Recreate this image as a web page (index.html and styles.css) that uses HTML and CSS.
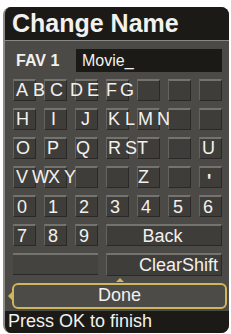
FILE: index.html
```html
<!DOCTYPE html>
<html>
<head>
    <link rel="stylesheet" href="styles.css">
</head>
<body>
    <div class="panel">
        <div class="title">Change Name</div>

        <div class="fav-row">
            <div class="fav-label">FAV 1</div>
            <div class="fav-input">Movie_</div>
        </div>

        <div class="keys">
            <div class="key-row">
                <div class="key"></div><div class="key"></div><div class="key"></div><div class="key"></div>
                <div class="key"></div><div class="key"></div><div class="key"></div>
                <div class="chars r1"><span>A</span><span>B</span><span>C</span><span>D</span><span>E</span><span>F</span><span>G</span></div>
            </div>
            <div class="key-row">
                <div class="key"></div><div class="key"></div><div class="key"></div><div class="key"></div>
                <div class="key"></div><div class="key"></div><div class="key"></div>
                <div class="chars r2"><span>H</span><span>I</span><span>J</span><span>K</span><span>L</span><span>M</span><span>N</span></div>
            </div>
            <div class="key-row">
                <div class="key"></div><div class="key"></div><div class="key"></div><div class="key"></div>
                <div class="key"></div><div class="key"></div><div class="key"></div>
                <div class="chars r3"><span>O</span><span>P</span><span>Q</span><span>R</span><span>S</span><span>T</span><span>U</span></div>
            </div>
            <div class="key-row">
                <div class="key"></div><div class="key"></div><div class="key"></div><div class="key"></div>
                <div class="key"></div><div class="key"></div><div class="key"></div>
                <div class="chars r4"><span>V</span><span>W</span><span>X</span><span>Y</span><span>Z</span><span class="tick">'</span></div>
            </div>
            <div class="key-row">
                <div class="key">0</div><div class="key">1</div><div class="key">2</div><div class="key">3</div>
                <div class="key">4</div><div class="key five">5</div><div class="key">6</div>
            </div>
            <div class="key-row">
                <div class="key">7</div><div class="key">8</div><div class="key">9</div>
                <div class="key wide back">Back</div>
            </div>
            <div class="key-row">
                <div class="key blank"></div>
                <div class="key wide clear">ClearShift</div>
            </div>
        </div>

        <div class="done-area">
            <div class="done">Done</div>
        </div>

        <div class="footer">Press OK to finish</div>
    </div>
</body>
</html>
```

FILE: styles.css
```css
:root {
    --bar: #1c1a17;
    --body: #4c4a47;
    --key: #3f3d3a;
    --key-light: #75736e;
    --key-dark: #2b2927;
    --text: #f2f1ee;
    --gold: #cdb65c;
}

body {
    margin: 0;
    background: #fff;
    font-family: 'Liberation Sans', Arial, sans-serif;
    color: var(--text);
}

.panel {
    margin: 7px 2px 2px 3px;
    background: var(--body);
    border-radius: 8px;
    overflow: hidden;
    border-left: 2px solid #8d8b87;
}

.title {
    background: var(--bar);
    height: 33px;
    line-height: 33px;
    font-size: 25px;
    font-weight: bold;
    padding-left: 7px;
    border-bottom: 1px solid #8a8884;
}

.fav-row {
    display: flex;
    padding: 8px 0 0 11px;
}

.fav-label {
    width: 60px;
    font-size: 16px;
    font-weight: bold;
    line-height: 23px;
}

.fav-input {
    width: 140px;
    height: 23px;
    line-height: 23px;
    background: var(--bar);
    font-size: 16px;
    padding-left: 6px;
}

.keys {
    display: flex;
    flex-direction: column;
    gap: 7px;
    margin: 7px 0 0 8px;
}

.key-row {
    position: relative;
    display: grid;
    grid-template-columns: repeat(7, 23px);
    column-gap: 8px;
}

.key {
    height: 22px;
    box-sizing: border-box;
    background: var(--key);
    border-top: 2px solid var(--key-light);
    border-left: 1px solid #65635f;
    border-right: 1px solid var(--key-dark);
    border-bottom: 1px solid var(--key-dark);
    font-size: 18px;
    line-height: 20px;
    padding-left: 3px;
}

.key.five { padding-left: 4px; }

.key.wide {
    grid-column: span 4;
}

.key.blank {
    grid-column: span 3;
    border-left: none;
    border-right: none;
    background: #454340;
}

.back {
    text-align: center;
    padding-right: 6px;
}

.clear {
    text-align: right;
    padding-right: 3px;
    height: 23px;
}

.chars {
    position: absolute;
    top: 0;
    left: 0;
    display: grid;
    padding-left: 3px;
    font-size: 18px;
    line-height: 22px;
}

.r1 { grid-template-columns: 17px 17px 20px 17px 19px 14px auto; }
.r2 { grid-template-columns: 35px 30px 27px 17px 13px 19px auto; }
.r3 { grid-template-columns: 31px 29px 32px 17px 12px 65px auto; }
.r4 { grid-template-columns: 16px 16px 16px 74px 69px auto; }

.tick {
    font-weight: bold;
    position: relative;
    top: 4px;
}

.done-area {
    padding: 7px 2px 0 7px;
}

.done {
    position: relative;
    height: 26px;
    box-sizing: border-box;
    border: 2px solid var(--gold);
    border-radius: 6px;
    background: #4d4b47;
    text-align: center;
    font-size: 18px;
    line-height: 21px;
}

.done::before {
    content: '';
    position: absolute;
    left: -6px;
    top: 7px;
    border: 4px solid transparent;
    border-right-color: var(--gold);
    border-left-width: 0;
}

.done::after {
    content: '';
    position: absolute;
    left: 102px;
    top: -7px;
    border: 4px solid transparent;
    border-bottom-color: var(--gold);
    border-top-width: 0;
}

.footer {
    margin-top: 2px;
    background: var(--bar);
    height: 22px;
    line-height: 20px;
    font-size: 18px;
    padding-left: 3px;
}
```
